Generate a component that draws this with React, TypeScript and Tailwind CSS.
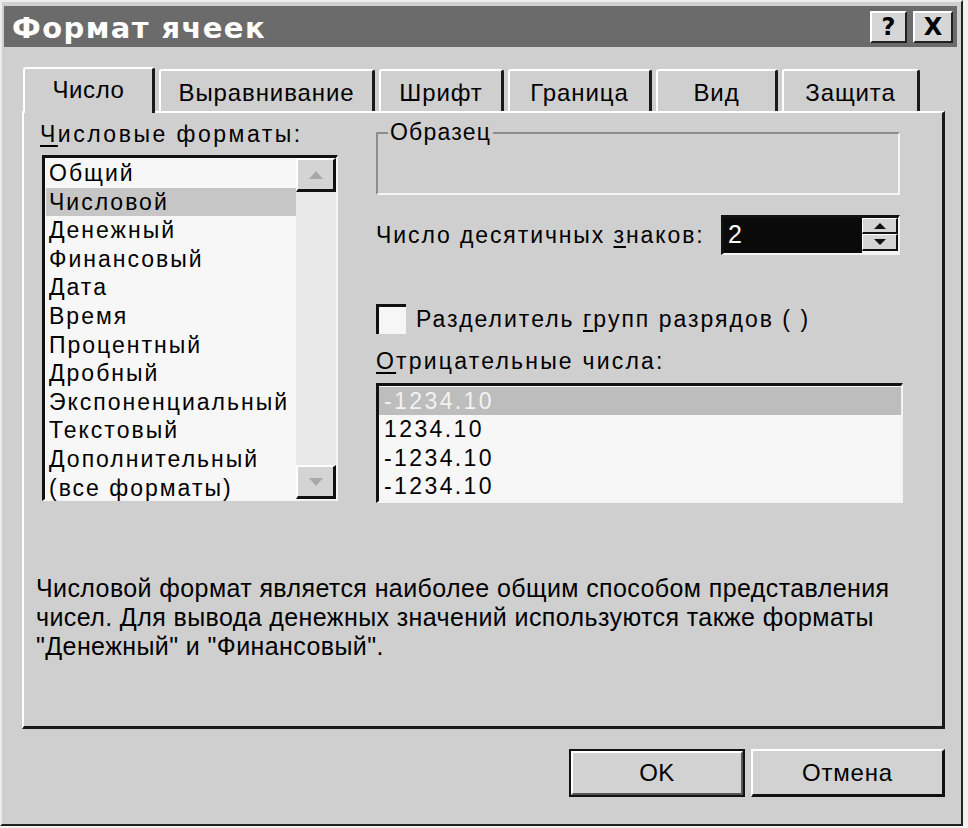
import React from 'react';

const formats = [
  'Общий',
  'Числовой',
  'Денежный',
  'Финансовый',
  'Дата',
  'Время',
  'Процентный',
  'Дробный',
  'Экспоненциальный',
  'Текстовый',
  'Дополнительный',
  '(все форматы)',
];

const negatives = ['-1234.10', '1234.10', '-1234.10', '-1234.10'];

const tabs = [
  { label: 'Выравнивание', w: 'w-[216px]' },
  { label: 'Шрифт', w: 'w-[125px]' },
  { label: 'Граница', w: 'w-[144px]' },
  { label: 'Вид', w: 'w-[122px]' },
  { label: 'Защита', w: 'w-[138px]' },
];

const Arrow = ({ up, color }: { up?: boolean; color: string }) => (
  <svg width="14" height="8" viewBox="0 0 14 8">
    <polygon points={up ? '7,0 14,8 0,8' : '0,0 14,0 7,8'} fill={color} />
  </svg>
);

const App = () => {
  return (
    <div className="w-[968px] h-[828px] bg-[#f2f2f2] font-['Liberation_Sans',sans-serif] text-black">
      <div className="w-[963px] h-[826px] bg-[#cfcfcf] border-l-2 border-t-2 border-[#ececec] border-r-2 border-b-2 border-r-[#222] border-b-[#222] pt-[4px] flex flex-col">
        {/* title bar */}
        <div className="ml-[2px] mr-[4px] h-[41px] bg-[#6b6b6b] flex items-center justify-between pl-[8px] pr-[4px]">
          <span className="text-white font-bold text-[29px] tracking-[1.4px] font-['DejaVu_Sans',sans-serif] leading-none pt-[3px]">
            Формат ячеек
          </span>
          <div className="flex gap-[6px]">
            <div className="w-[37px] h-[32px] bg-[#d6d6d6] border-2 border-t-white border-l-white border-r-[#202020] border-b-[#202020] flex items-center justify-center font-bold text-[24px] font-['DejaVu_Sans',sans-serif]">
              ?
            </div>
            <div className="w-[40px] h-[32px] bg-[#d6d6d6] border-2 border-t-white border-l-white border-r-[#202020] border-b-[#202020] flex items-center justify-center font-bold text-[24px] font-['DejaVu_Sans',sans-serif]">
              X
            </div>
          </div>
        </div>

        {/* tabs */}
        <div className="pl-[20px] pr-[16px] mt-[20px]">
          <div className="flex items-end h-[44px] pl-[1px] relative z-10">
            <div className="w-[132px] h-[46px] mb-[-2px] bg-[#cfcfcf] border-t-2 border-l-2 border-white border-r-[3px] border-r-[#1a1a1a] rounded-t-[3px] flex items-center justify-center pb-[2px] text-[24px] tracking-[0.6px]">
              Число
            </div>
            {tabs.map((t) => (
              <div
                key={t.label}
                className={`${t.w} h-[42px] ml-[4px] bg-[#cfcfcf] border-t-2 border-l-2 border-white border-r-[3px] border-r-[#1a1a1a] rounded-t-[3px] flex items-center justify-center pt-[4px] text-[24px] tracking-[0.9px]`}
              >
                {t.label}
              </div>
            ))}
          </div>

          {/* panel */}
          <div className="h-[618px] border-t-2 border-l-2 border-white border-r-[3px] border-b-[3px] border-r-[#1a1a1a] border-b-[#1a1a1a] pl-[16px] pt-[7px] flex flex-col">
            <div className="flex">
              {/* left column */}
              <div className="w-[298px] flex flex-col">
                <div className="text-[23px] leading-[28px] tracking-[2.5px]">
                  <span className="underline underline-offset-[3px]">Ч</span>исловые форматы:
                </div>
                <div className="mt-[7px] ml-[2px] h-[346px] w-[296px] bg-[#f7f7f7] border-t-[3px] border-l-[3px] border-[#111] border-r-2 border-b-2 border-r-[#f4f4f4] border-b-[#f4f4f4] flex">
                  <div className="flex-1 pl-[1px] pt-[1px]">
                    {formats.map((f, i) => (
                      <div
                        key={f}
                        className={`h-[28.6px] leading-[28.6px] pl-[3px] text-[23px] tracking-[2px] whitespace-nowrap ${i === 1 ? 'bg-[#c6c6c6]' : ''}`}
                      >
                        {f}
                      </div>
                    ))}
                  </div>
                  <div className="w-[40px] flex flex-col justify-between bg-[#e9e9e9]">
                    <div className="h-[34px] bg-[#d4d4d4] border-t-2 border-l-2 border-t-white border-l-white border-r-[3px] border-b-[3px] border-r-[#111] border-b-[#111] flex items-center justify-center">
                      <Arrow up color="#a8a8a8" />
                    </div>
                    <div className="h-[34px] bg-[#d4d4d4] border-t-2 border-l-2 border-t-white border-l-white border-r-[3px] border-b-[3px] border-r-[#111] border-b-[#111] flex items-center justify-center">
                      <Arrow color="#a8a8a8" />
                    </div>
                  </div>
                </div>
              </div>

              {/* right column */}
              <div className="ml-[38px] w-[527px] flex flex-col">
                {/* sample group */}
                <div className="relative mt-[12px] w-[524px] h-[63px] border-2 border-t-[#8c8c8c] border-l-[#8c8c8c] border-r-[#f4f4f4] border-b-[#f4f4f4]">
                  <span className="absolute left-[10px] top-[-16px] bg-[#cfcfcf] px-[2px] text-[23px] leading-[28px] tracking-[1.2px]">
                    Образец
                  </span>
                </div>

                {/* decimals */}
                <div className="mt-[20px] flex items-center justify-between w-[524px]">
                  <span className="text-[23px] tracking-[1.9px]">
                    Число десятичных <span className="underline underline-offset-[3px]">з</span>наков:
                  </span>
                  <div className="w-[179px] h-[40px] bg-[#f4f4f4] border-t-[3px] border-l-[3px] border-[#111] border-r-2 border-b-2 border-r-[#f4f4f4] border-b-[#f4f4f4] flex">
                    <div className="flex-1 bg-[#0a0a0a] text-white text-[25px] leading-[32px] pl-[4px]">2</div>
                    <div className="w-[36px] flex flex-col">
                      <div className="h-[16px] bg-[#d4d4d4] border-t border-l border-white border-r-2 border-b-2 border-r-[#111] border-b-[#111] flex items-center justify-center">
                        <svg width="12" height="6" viewBox="0 0 12 6"><polygon points="6,0 12,6 0,6" fill="#111" /></svg>
                      </div>
                      <div className="h-[17px] bg-[#d4d4d4] border-t border-l border-white border-r-2 border-b-2 border-r-[#111] border-b-[#111] flex items-center justify-center">
                        <svg width="12" height="6" viewBox="0 0 12 6"><polygon points="0,0 12,0 6,6" fill="#111" /></svg>
                      </div>
                    </div>
                  </div>
                </div>

                {/* checkbox */}
                <div className="mt-[47px] flex items-center gap-[10px]">
                  <div className="w-[30px] h-[30px] bg-[#f6f6f6] border-t-[3px] border-l-[3px] border-[#111] border-r-[#f6f6f6] border-b-[#f6f6f6]" />
                  <span className="text-[23px] tracking-[2px]">
                    Разделитель <span className="underline underline-offset-[3px]">г</span>рупп разрядов ( )
                  </span>
                </div>

                {/* negatives */}
                <div className="mt-[10px] text-[23px] leading-[28px] tracking-[2.2px]">
                  <span className="underline underline-offset-[3px]">О</span>трицательные числа:
                </div>
                <div className="mt-[8px] w-[527px] h-[120px] bg-[#f7f7f7] border-t-[3px] border-l-[3px] border-[#111] border-r-2 border-b-2 border-r-[#f4f4f4] border-b-[#f4f4f4] pt-[1px]">
                  {negatives.map((n, i) => (
                    <div
                      key={i}
                      className={`h-[28.5px] leading-[28.5px] pl-[5px] text-[23px] tracking-[2.4px] ${i === 0 ? 'bg-[#bdbdbd] text-[#f2f2f2]' : ''}`}
                    >
                      {n}
                    </div>
                  ))}
                </div>
              </div>
            </div>

            {/* description */}
            <div className="mt-[71px] ml-[-4px] text-[25px] leading-[29px] tracking-[0.4px] whitespace-nowrap">
              <div>Числовой формат является наиболее общим способом представления</div>
              <div>чисел. Для вывода денежных значений используются также форматы</div>
              <div>"Денежный" и "Финансовый".</div>
            </div>
          </div>
        </div>

        {/* buttons */}
        <div className="mt-[20px] flex justify-end gap-[6px] pr-[16px]">
          <div className="w-[176px] h-[48px] border-2 border-[#111] flex">
            <div className="flex-1 bg-[#d2d2d2] border-t-2 border-l-2 border-white border-r-2 border-b-2 border-r-[#555] border-b-[#555] flex items-center justify-center text-[24px] tracking-[0.5px]">
              OK
            </div>
          </div>
          <div className="w-[194px] h-[48px] bg-[#d2d2d2] border-t-2 border-l-2 border-white border-r-[3px] border-b-[3px] border-r-[#111] border-b-[#111] flex items-center justify-center text-[24px] tracking-[0.8px]">
            Отмена
          </div>
        </div>
      </div>
    </div>
  );
};

export default App;
